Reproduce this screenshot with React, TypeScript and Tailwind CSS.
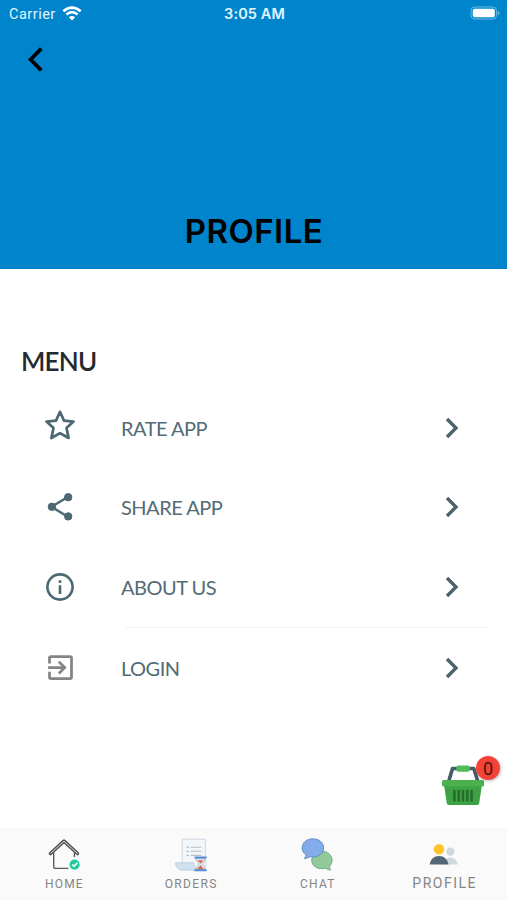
import React from 'react';

const ChevronRight: React.FC = () => (
  <svg viewBox="0 0 14 22" className="w-3.5 h-[22px] shrink-0" fill="none" stroke="#4c636c" strokeWidth="3.4">
    <path d="M2 2 11 11 2 20" />
  </svg>
);

const StarIcon: React.FC = () => (
  <svg viewBox="0 0 30 30" className="w-[30px] h-[30px] -mt-1.5" fill="none" stroke="#4c6873" strokeWidth="2.7" strokeLinejoin="round">
    <path d="M15 1.8 19 10.6 28.5 11.6 21.5 18 23.6 28 15 23.1 6.4 28 8.5 18 1.5 11.6 11 10.6Z" />
  </svg>
);

const ShareIcon: React.FC = () => (
  <svg viewBox="0 0 30 30" className="w-[30px] h-[30px]" fill="#4c6873" stroke="#4c6873">
    <path d="M22 5.5 6.5 14.8 22 24.3" fill="none" strokeWidth="2.5" />
    <circle cx="23.2" cy="5.2" r="3.7" />
    <circle cx="6.9" cy="14.8" r="3.7" />
    <circle cx="23.2" cy="24.4" r="3.7" />
  </svg>
);

const InfoIcon: React.FC = () => (
  <svg viewBox="0 0 30 30" className="w-[30px] h-[30px]" fill="none" stroke="#4c6873" strokeWidth="2.6">
    <circle cx="15" cy="15" r="12.6" />
    <path d="M15 13.3v8.6M15 8.2v2.8" />
  </svg>
);

const LoginIcon: React.FC = () => (
  <svg viewBox="0 0 24 24" className="w-[33px] h-[33px]" fill="#858585">
    <path d="M10.09 15.59 11.5 17l5-5-5-5-1.41 1.41L12.67 11H3v2h9.67l-2.58 2.59zM19 3H5a2 2 0 0 0-2 2v4h2V5h14v14H5v-4H3v4a2 2 0 0 0 2 2h14a2 2 0 0 0 2-2V5a2 2 0 0 0-2-2z" />
  </svg>
);

const HomeIcon: React.FC = () => (
  <svg viewBox="0 0 34 34" className="w-[34px] h-[34px]" fill="none">
    <path d="M3.5 15.5 17 3.2l13.5 12.3" stroke="#555" strokeWidth="3.6" strokeLinecap="round" strokeLinejoin="round" />
    <path d="M3.7 15.3 17 3.2l13.3 12.1" stroke="#d8d8d8" strokeWidth="1" strokeLinecap="round" />
    <path d="M6.7 15v13.2q0 2.2 2.2 2.2H21.5M27.4 15v4" stroke="#5c5c5c" strokeWidth="1.4" />
    <circle cx="27.6" cy="26.6" r="5.1" fill="#20cb9d" />
    <path d="m25.2 26.5 1.9 1.9 3.3-3.6" stroke="#fff" strokeWidth="1.6" />
  </svg>
);

const OrdersIcon: React.FC = () => (
  <svg viewBox="0 0 34 34" className="w-[34px] h-[34px]" fill="none">
    <path d="M8.2 1.2H31.3V31.8H8.2Z" fill="#f4f7fa" stroke="#c9d2dc" strokeWidth=".9" />
    <path d="M16.5 9.2h11M16.5 13.3h11M16.5 17.4h11" stroke="#b7bfc7" strokeWidth="1.1" />
    <path d="M12.7 9.2h1.8M12.7 13.3h1.8M12.7 17.4h1.8" stroke="#8cabd9" strokeWidth="1.2" />
    <path d="M1.4 24.8H19.5q.5 4 4.2 7.2H7Q2 30.8 1.4 24.8Z" fill="#cfe0ee" stroke="#b8cad8" strokeWidth=".8" />
    <path d="M22 20.2H31q0 3.5-3.2 5.8 3.2 2.2 3.2 6H22q0-3.8 3.2-6-3.2-2.3-3.2-5.8Z" fill="#dbe9f6" stroke="#93abc7" strokeWidth=".7" />
    <path d="M23.5 22.2H29.5L26.5 25.6ZM26.5 27.3 30 31.3H23Z" fill="#e3663e" />
    <path d="M20.4 19.5H32.6M20.4 32.3H32.6" stroke="#5589d8" strokeWidth="2" />
  </svg>
);

const ChatIcon: React.FC = () => (
  <svg viewBox="0 0 34 34" className="w-[34px] h-[34px]" strokeWidth=".9">
    <path d="M20.8 13.2c5.8 0 10.3 3.8 10.3 9.1 0 2.5-1.1 4.6-2.7 6.2.1 1.3.6 2.4 1.5 3.4-2.2-.1-4-.8-5.2-1.7-7.6 1.8-14-1.8-14-7.9 0-5.2 4.5-9.1 10.1-9.1Z" fill="#91c999" stroke="#6fa482" />
    <path d="M11.8.8c6.2 0 10.8 3.7 10.8 9.2 0 5.9-6.2 10.2-13.5 8.6-1.5 1.1-3.2 1.8-5.7 2 .9-1.2 1.5-2.5 1.6-3.8C2.7 15.2 1.2 13.1 1.2 10 1.2 4.5 5.8.8 11.8.8Z" fill="#83acea" stroke="#6287bd" />
  </svg>
);

const PeopleIcon: React.FC = () => (
  <svg viewBox="0 0 34 34" className="w-[34px] h-[34px]">
    <circle cx="22.4" cy="13.6" r="4.2" fill="#cfd8dc" />
    <path d="M15 26.5q1.5-7 7.5-7 6 .5 7.4 7Z" fill="#cfd8dc" />
    <circle cx="11" cy="11.2" r="5.2" fill="#ffc528" />
    <path d="M1.6 26.5q1.5-8.6 9.4-8.6 8 0 9.5 8.6Z" fill="#546774" />
  </svg>
);

const BasketIcon: React.FC = () => (
  <svg viewBox="0 0 44 44" className="w-11 h-11">
    <path d="M7.5 20 11.5 6.5H32.8L37 20" fill="none" stroke="#455b68" strokeWidth="3.6" strokeLinejoin="round" />
    <rect x="15.3" y="3.4" width="13.4" height="6.4" rx="1.8" fill="#4fbd57" />
    <path d="M3 22.5H41L38.2 41.2q-.3 1.8-2.2 1.8H8q-1.9 0-2.2-1.8Z" fill="#3da243" />
    <rect x="1" y="18" width="42" height="6.4" rx="1.5" fill="#4caf50" />
    <path d="M13.4 28v11.5M17.7 28v11.5M22 28v11.5M26.3 28v11.5M30.6 28v11.5" stroke="#236a2b" strokeWidth="2.4" />
  </svg>
);

const MENU_ITEMS = [
  { label: 'RATE APP', icon: <StarIcon /> },
  { label: 'SHARE APP', icon: <ShareIcon /> },
  { label: 'ABOUT US', icon: <InfoIcon /> },
];

const MenuRow: React.FC<{ label: string; icon: React.ReactNode }> = ({ label, icon }) => (
  <button className="flex items-center w-full h-[79.6px] pl-[42px] pr-[48px] text-left">
    <span className="flex justify-center w-9">{icon}</span>
    <span className="flex-1 ml-[43px] text-[20px] tracking-[-0.5px] text-[#526b75]">{label}</span>
    <ChevronRight />
  </button>
);

const TABS = [
  { label: 'HOME', icon: <HomeIcon />, style: 'mt-0.5 ml-0.5 text-[12px] tracking-[1.15px]' },
  { label: 'ORDERS', icon: <OrdersIcon />, style: 'mt-0.5 ml-0.5 text-[12px] tracking-[1.35px]' },
  { label: 'CHAT', icon: <ChatIcon />, style: 'mt-0.5 ml-0.5 text-[12px] tracking-[1.2px]' },
  { label: 'PROFILE', icon: <PeopleIcon />, style: 'mt-px ml-0.5 text-[14px] tracking-[1.5px]' },
];

const App: React.FC = () => {
  return (
    <div className="relative flex flex-col h-[900px] w-[507px] overflow-hidden bg-white font-['Lato',sans-serif]">
      <header className="flex flex-col h-[269px] bg-[#0085cc] font-['Inter',sans-serif]">
        <div className="grid grid-cols-3 items-center h-7 pl-[9px] pr-[7px] text-[#e0f6ff]">
          <div className="flex items-center gap-1.5">
            <span className="pt-px font-['Roboto',sans-serif] text-[14.5px] tracking-[0.5px]">Carrier</span>
            <svg viewBox="0 0 20 15" className="w-5 h-[15px] -mt-0.5" fill="none" stroke="#fff" strokeWidth="2.6">
              <path d="M1.3 5.3Q10-2.1 18.7 5.3M4.4 8.6q5.6-4.8 11.2 0" />
              <path d="M6.8 11.2q3.2-2.6 6.4 0L10 14.4Z" fill="#fff" stroke="none" />
            </svg>
          </div>
          <span className="text-center text-[14.5px] font-semibold tracking-[0.1px]">3:05 AM</span>
          <svg viewBox="0 0 30 14" className="justify-self-end w-[30px] h-3.5 -mt-0.5">
            <rect x="1" y="1" width="25.5" height="12" rx="3.5" fill="none" stroke="#69bce8" />
            <rect x="2.8" y="2.8" width="22" height="8.4" rx="1.8" fill="#fff" />
            <path d="M27.8 5v4q1.8-.7 1.8-2t-1.8-2Z" fill="#69bce8" />
          </svg>
        </div>
        <button className="mt-[19px] ml-7 w-[15px]">
          <svg viewBox="0 0 15 25" className="w-[15px] h-[25px]" fill="none" stroke="#000" strokeWidth="3.8">
            <path d="M13.3 1.7 2.7 12.5 13.3 23.3" />
          </svg>
        </button>
        <h1 className="mt-auto mb-[18px] pl-px text-center text-[33px] leading-10 font-semibold tracking-[0.45px] text-black">
          PROFILE
        </h1>
      </header>

      <main className="flex-1 pt-[74px]">
        <h2 className="ml-[21px] h-[45px] text-[26px] leading-9 font-semibold tracking-[-0.8px] text-[#232b30]">MENU</h2>
        {MENU_ITEMS.map((item) => (
          <MenuRow key={item.label} {...item} />
        ))}
        <div className="ml-[125px] mr-[18px] h-px bg-[#f3f3f3]" />
        <MenuRow label="LOGIN" icon={<LoginIcon />} />
      </main>

      <button className="absolute left-[441px] top-[762px] w-11 h-11">
        <BasketIcon />
        <span className="absolute left-[35px] -top-1.5 flex items-center justify-center w-6 h-6 rounded-full bg-[#f44336] shadow-[1px_1px_3px_rgba(0,0,0,0.25)] font-['Roboto',sans-serif] text-[18px] text-[#3d1714]">
          0
        </span>
      </button>

      <nav className="grid grid-cols-4 h-[72px] bg-[#fafafa] font-['Roboto',sans-serif] text-[#858585]">
        {TABS.map((tab) => (
          <button key={tab.label} className="flex flex-col items-center pt-2.5">
            <span className="pl-0.5">{tab.icon}</span>
            <span className={`h-5 leading-5 ${tab.style}`}>{tab.label}</span>
          </button>
        ))}
      </nav>
    </div>
  );
};

export default App;
